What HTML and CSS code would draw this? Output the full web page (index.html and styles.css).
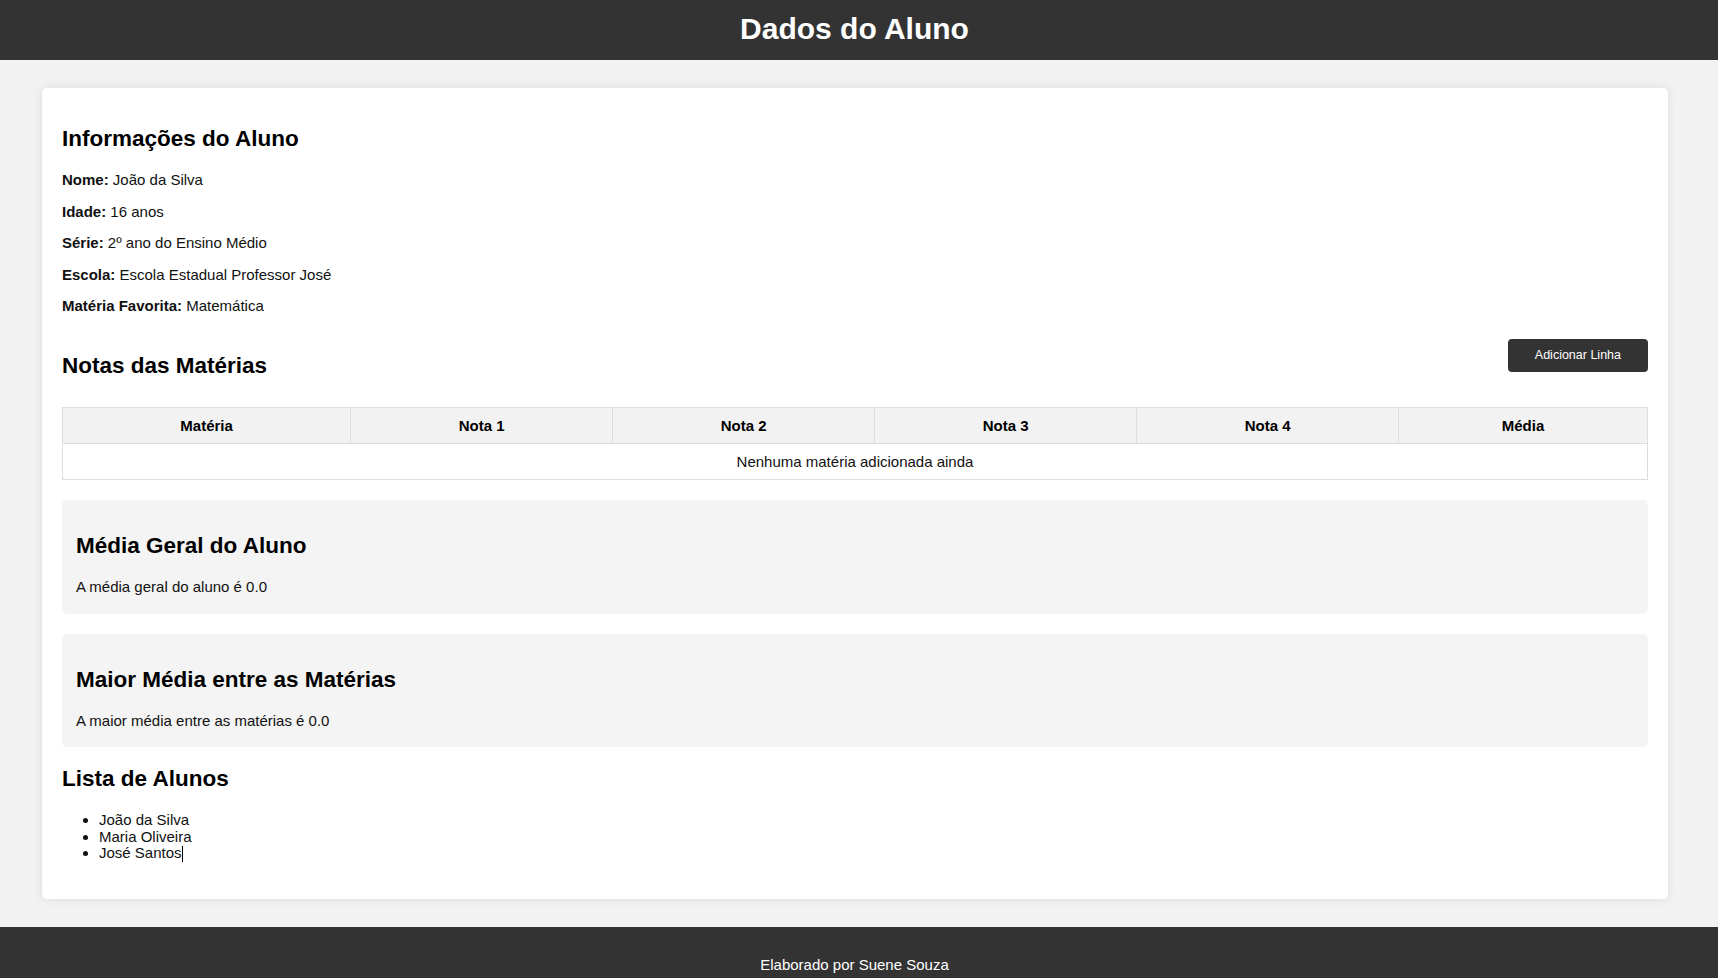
FILE: index.html
```html
<!DOCTYPE html>
<html lang="pt-BR">
<head>
<meta charset="utf-8">
<title>Dados do Aluno</title>
<link rel="stylesheet" href="styles.css">
</head>
<body>
<header class="top">
  <h1 class="top-title">Dados do Aluno</h1>
</header>
<main class="card">
  <h2 class="title first">Informações do Aluno</h2>
  <p class="info"><strong>Nome:</strong> João da Silva</p>
  <p class="info"><strong>Idade:</strong> 16 anos</p>
  <p class="info"><strong>Série:</strong> 2º ano do Ensino Médio</p>
  <p class="info"><strong>Escola:</strong> Escola Estadual Professor José</p>
  <p class="info"><strong>Matéria Favorita:</strong> Matemática</p>

  <div class="notas-head">
    <h2 class="title notas-title">Notas das Matérias</h2>
    <button class="btn">Adicionar Linha</button>
  </div>
  <table class="grades">
    <thead>
      <tr><th>Matéria</th><th>Nota 1</th><th>Nota 2</th><th>Nota 3</th><th>Nota 4</th><th>Média</th></tr>
    </thead>
    <tbody>
      <tr><td colspan="6">Nenhuma matéria adicionada ainda</td></tr>
    </tbody>
  </table>

  <section class="box">
    <h2 class="title box-title">Média Geral do Aluno</h2>
    <p class="box-text">A média geral do aluno é 0.0</p>
  </section>
  <section class="box">
    <h2 class="title box-title">Maior Média entre as Matérias</h2>
    <p class="box-text">A maior média entre as matérias é 0.0</p>
  </section>

  <h2 class="title list-title">Lista de Alunos</h2>
  <ul class="students">
    <li>João da Silva</li>
    <li>Maria Oliveira</li>
    <li>José Santos<span class="caret"></span></li>
  </ul>
</main>
<footer class="bottom">
  <p class="bottom-text">Elaborado por Suene Souza</p>
</footer>
</body>
</html>
```
FILE: styles.css
```css
html, body {
  margin: 0;
  padding: 0;
}
body {
  background: #f2f2f2;
  font-family: "Liberation Sans", Arial, sans-serif;
  font-size: 15px;
  line-height: 16.4px;
  color: #111;
}
.top {
  background: #333;
  padding: 12px 9px 14px 0;
  text-align: center;
}
.top-title {
  margin: 0;
  color: #fff;
  font-size: 30px;
  line-height: 34px;
  font-weight: bold;
}
.card {
  display: block;
  background: #fff;
  margin: 28px 50px 28px 42px;
  padding: 20px;
  border-radius: 5px;
  box-shadow: 0 0 10px rgba(0, 0, 0, 0.1);
}
.title {
  font-size: 22.5px;
  line-height: 25.3px;
  font-weight: bold;
  color: #000;
  margin: 0 0 20.8px;
}
.first {
  margin-top: 18.4px;
}
.info {
  margin: 15px 0;
}
.notas-head {
  display: flex;
  justify-content: space-between;
  align-items: flex-start;
  margin-top: 24.5px;
}
.notas-title {
  margin: 14px 0 0;
}
.btn {
  background: #333;
  color: #fff;
  border: none;
  border-radius: 4px;
  font-family: "Liberation Sans", Arial, sans-serif;
  font-size: 12.5px;
  line-height: 17px;
  padding: 8px 27px;
  cursor: pointer;
}
.grades {
  width: 100%;
  border-collapse: collapse;
  margin-top: 29px;
}
.grades th,
.grades td {
  border: 1px solid #ddd;
  padding: 9px 10px;
  line-height: 17px;
  text-align: center;
}
.grades th {
  background: #f2f2f2;
  font-weight: bold;
  color: #000;
}
.box {
  background: #f4f4f4;
  border-radius: 5px;
  padding: 15px 14px 18px;
  margin-top: 20px;
}
.box-title {
  margin-top: 18px;
}
.box-text {
  margin: 0;
}
.list-title {
  margin-top: 19px;
}
.students {
  margin: 0 0 16.4px;
  padding-left: 37px;
}
.caret {
  display: inline-block;
  width: 1px;
  height: 16px;
  background: #000;
  vertical-align: -4px;
}
.bottom {
  background: #333;
  color: #fff;
  text-align: center;
  padding: 30px 9px 30px 0;
}
.bottom-text {
  margin: 0;
}
```
